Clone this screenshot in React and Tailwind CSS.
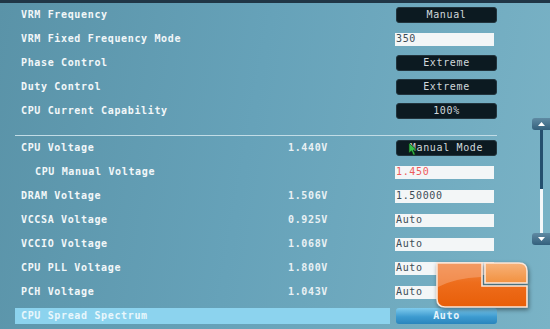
import React from 'react';

const FONT = "font-['DejaVu_Sans_Mono','Liberation_Mono',monospace]";

const topRows = [
  { label: 'VRM Frequency', kind: 'btn', text: 'Manual' },
  { label: 'VRM Fixed Frequency Mode', kind: 'input', text: '350' },
  { label: 'Phase Control', kind: 'btn', text: 'Extreme' },
  { label: 'Duty Control', kind: 'btn', text: 'Extreme' },
  { label: 'CPU Current Capability', kind: 'btn', text: '100%' },
];

const voltRows = [
  { label: 'CPU Voltage', value: '1.440V', kind: 'btn', text: 'Manual Mode', cursor: true },
  { label: 'CPU Manual Voltage', indent: true, kind: 'input', text: '1.450', red: true },
  { label: 'DRAM Voltage', value: '1.506V', kind: 'input', text: '1.50000' },
  { label: 'VCCSA Voltage', value: '0.925V', kind: 'input', text: 'Auto' },
  { label: 'VCCIO Voltage', value: '1.068V', kind: 'input', text: 'Auto' },
  { label: 'CPU PLL Voltage', value: '1.800V', kind: 'input', text: 'Auto' },
  { label: 'PCH Voltage', value: '1.043V', kind: 'input', text: 'Auto' },
  { label: 'CPU Spread Spectrum', kind: 'blue', text: 'Auto', active: true },
];

function Control({ kind, text, red, cursor }) {
  if (kind === 'input') {
    return (
      <div className={`w-[99px] h-[13px] bg-[#f3f6f7] flex items-center pl-px font-normal ${red ? 'text-[#ef5b5b]' : 'text-[#3d4c56]'}`}>
        {text}
      </div>
    );
  }
  if (kind === 'blue') {
    return (
      <div className="ml-px w-[101px] h-[16px] rounded-[3px] bg-[linear-gradient(180deg,#7fcbed_0%,#3d9bd0_55%,#2a85bd_100%)] flex items-center justify-center text-[#e6f4fb]">
        {text}
      </div>
    );
  }
  return (
    <div className="relative ml-px w-[101px] h-[16px] rounded-[3px] bg-[#0c1a21] border border-[#22343d] flex items-center justify-center font-normal text-[#d0d8dc]">
      {text}
      {cursor && (
        <svg className="absolute left-[11px] top-[2px]" width="10" height="13" viewBox="0 0 10 13">
          <path d="M1 0 L1 10 L3.5 7.8 L5.5 12.2 L7.2 11.4 L5.2 7.2 L8.6 7 Z" fill="#35c24a" stroke="#0d3a16" strokeWidth="0.7" />
        </svg>
      )}
    </div>
  );
}

function Row({ row }) {
  return (
    <div className="flex items-center h-6">
      {row.active ? (
        <div className="w-[375px] h-4 bg-[#8cd3ee] flex items-center pl-[6px] text-[#e9f7fc]">
          {row.label}
        </div>
      ) : (
        <>
          <div className={`w-[273px] ${row.indent ? 'pl-[20px]' : 'pl-[6px]'} text-[#f2f7f9]`}>{row.label}</div>
          <div className="w-[107px] text-[#e9f1f4]">{row.value || ''}</div>
        </>
      )}
      {row.active && <div className="w-[5px]" />}
      <Control kind={row.kind} text={row.text} red={row.red} cursor={row.cursor} />
    </div>
  );
}

function ScrollButton({ down }) {
  return (
    <div className="w-[18px] h-[12px] rounded-l-[3px] bg-[linear-gradient(180deg,#5f8aa3_0%,#33607c_100%)] flex items-center justify-center">
      <svg width="7" height="4" viewBox="0 0 7 4">
        <path d={down ? 'M0 0 L7 0 L3.5 4 Z' : 'M0 4 L7 4 L3.5 0 Z'} fill="#ffffff" />
      </svg>
    </div>
  );
}

function Logo() {
  return (
    <svg className="absolute left-[435px] top-[261px] drop-shadow-[1px_2px_2px_rgba(0,0,0,0.45)]" width="95" height="50" viewBox="0 0 95 50">
      <defs>
        <linearGradient id="lgMain" x1="0" y1="0" x2="0" y2="1">
          <stop offset="0%" stopColor="#f08a4a" />
          <stop offset="45%" stopColor="#ee6d1c" />
          <stop offset="100%" stopColor="#e85e08" />
        </linearGradient>
        <linearGradient id="lgTop" x1="0" y1="0" x2="0" y2="1">
          <stop offset="0%" stopColor="#f7b27a" />
          <stop offset="100%" stopColor="#f2913f" />
        </linearGradient>
      </defs>
      <path d="M2 2 H47 V25 H92 V46 H10 Q2 46 2 38 Z" fill="url(#lgMain)" stroke="#fbe6d8" strokeWidth="1.6" />
      <path d="M3 3 H46 V16 Q20 17 3 26 Z" fill="#f5a878" opacity="0.55" />
      <path d="M50 2 H84 Q92 2 92 10 V22 H50 Z" fill="url(#lgTop)" stroke="#fbe6d8" strokeWidth="1.6" />
    </svg>
  );
}

export default function App() {
  return (
    <div className={`relative w-[550px] h-[329px] overflow-hidden ${FONT} text-[10px] font-bold tracking-[0.65px] leading-none bg-[linear-gradient(100deg,#5a93a8_0%,#66a2b9_45%,#7ab3c6_100%)]`}>
      <div className="h-[3px] bg-[#203646]" />
      <div className="flex">
        <div className="pl-[15px] w-[515px]">
          {topRows.map((r) => (
            <Row key={r.label} row={r} />
          ))}
          <div className="mt-3 w-[482px] border-t border-[#c2dce6]">
            {voltRows.map((r) => (
              <Row key={r.label} row={r} />
            ))}
          </div>
        </div>
        <div className="flex-1 pt-[115px] flex flex-col items-end">
          <ScrollButton />
          <div className="w-[18px] flex">
            <div className="ml-[8px] w-[3px] flex flex-col">
              <div className="h-[59px] bg-[#244f6e]" />
              <div className="h-[44px] bg-[#f5f8fa]" />
            </div>
          </div>
          <ScrollButton down />
        </div>
      </div>
      <Logo />
    </div>
  );
}
